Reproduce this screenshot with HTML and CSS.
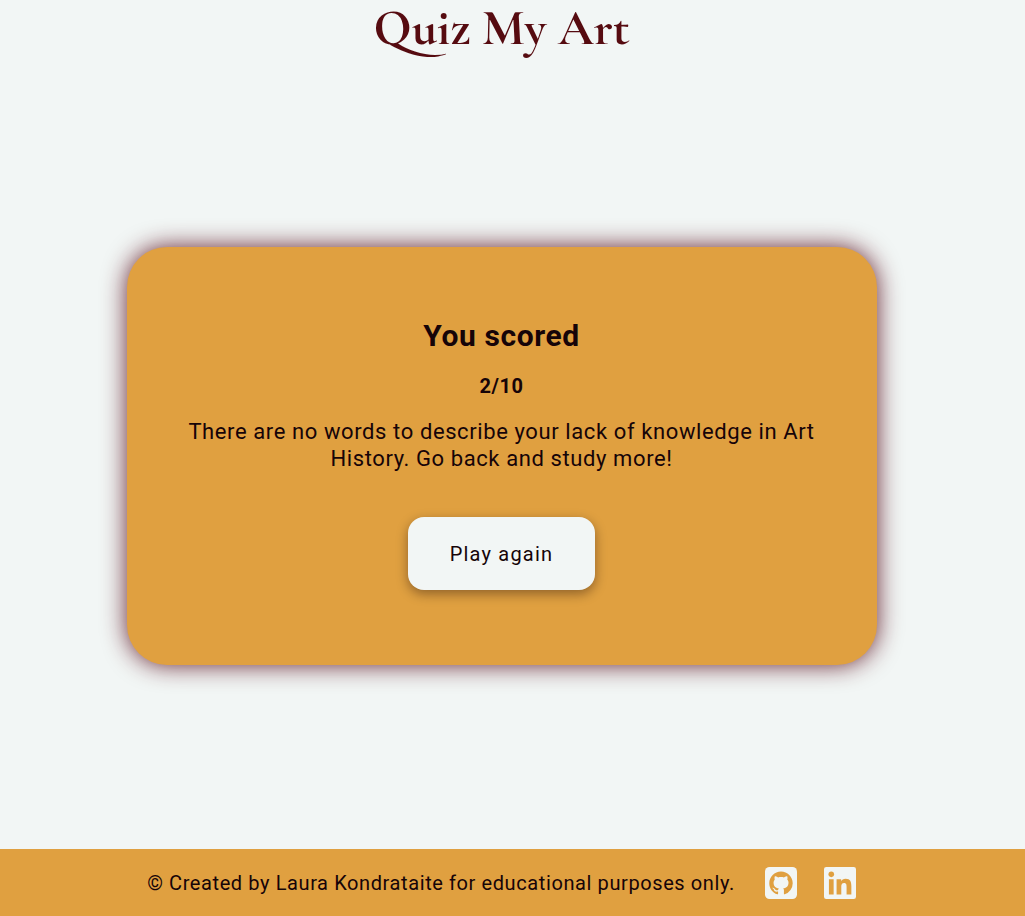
FILE: index.html
```
<!DOCTYPE html>
<html lang="en">
<head>
<meta charset="utf-8">
<meta name="viewport" content="width=device-width, initial-scale=1">
<title>Quiz My Art</title>
<link rel="stylesheet" href="styles.css">
</head>
<body>
<header class="header">
  <h1 class="title">Quiz My Art</h1>
</header>
<main class="main">
  <section class="card">
    <h2 class="card-title">You scored</h2>
    <p class="score">2/10</p>
    <p class="message">There are no words to describe your lack of knowledge in Art History. Go back and study more!</p>
    <button class="button" type="button">Play again</button>
  </section>
</main>
<footer class="footer">
  <p class="credit">© Created by Laura Kondrataite for educational purposes only.</p>
  <nav class="links">
    <a class="link" href="#github" aria-label="GitHub">
      <svg class="icon" viewBox="0 0 448 448" aria-hidden="true">
        <rect class="icon-tile" width="448" height="448" rx="64"/>
        <g transform="translate(60 62) scale(20.5)">
          <path class="icon-mark" d="M8 0C3.58 0 0 3.58 0 8c0 3.54 2.29 6.53 5.47 7.59.4.07.55-.17.55-.38 0-.19-.01-.82-.01-1.49-2.01.37-2.53-.49-2.69-.94-.09-.23-.48-.94-.82-1.13-.28-.15-.68-.52-.01-.53.63-.01 1.08.58 1.23.82.72 1.21 1.87.87 2.33.66.07-.52.28-.87.51-1.07-1.78-.2-3.64-.89-3.64-3.95 0-.87.31-1.59.82-2.15-.08-.2-.36-1.02.08-2.12 0 0 .67-.21 2.2.82.64-.18 1.32-.27 2-.27s1.36.09 2 .27c1.53-1.04 2.2-.82 2.2-.82.44 1.1.16 1.92.08 2.12.51.56.82 1.27.82 2.15 0 3.07-1.87 3.75-3.65 3.95.29.25.54.73.54 1.48 0 1.07-.01 1.93-.01 2.2 0 .21.15.46.55.38A8.01 8.01 0 0 0 16 8c0-4.42-3.58-8-8-8z"/>
        </g>
      </svg>
    </a>
    <a class="link" href="#linkedin" aria-label="LinkedIn">
      <svg class="icon" viewBox="0 0 448 448" aria-hidden="true">
        <rect class="icon-tile" width="448" height="448" rx="32"/>
        <circle class="icon-mark" cx="102" cy="103" r="39"/>
        <path class="icon-mark" d="M69 170h66v214H69zM176 170h64v30c9-17 31-35 63-35 67 0 80 44 80 102v117h-67V280c0-25 0-57-34-57-35 0-40 27-40 55v106h-66z"/>
      </svg>
    </a>
  </nav>
</footer>
</body>
</html>
```
FILE: styles.css
```
:root {
  --paper: #f2f6f5;
  --gold: #e0a040;
  --wine: #560b10;
  --ink: #160408;
  --gutter: 22px;
}

* {
  box-sizing: border-box;
}

body {
  display: flex;
  flex-direction: column;
  min-height: 100vh;
  margin: 0;
  background: var(--paper);
  color: var(--ink);
  font-family: Roboto, "Liberation Sans", sans-serif;
  font-size: 20px;
  letter-spacing: 0.03em;
}

h1, h2, p {
  margin: 0;
}

.header {
  padding-right: var(--gutter);
  text-align: center;
}

.title {
  color: var(--wine);
  font: 700 50px/56px "Cormorant Garamond", "Liberation Serif", serif;
  letter-spacing: normal;
}

.main {
  flex: 1;
  display: flex;
  align-items: center;
  justify-content: center;
  padding: 7px var(--gutter) 0 0;
}

.card {
  display: flex;
  flex-direction: column;
  align-items: center;
  width: 75%;
  max-width: 750px;
  padding: 71px 60px 75px;
  border-radius: 40px;
  background: var(--gold);
  box-shadow: 0 0 24px rgb(86 11 26 / 90%);
  text-align: center;
}

.card-title {
  font-size: 30px;
  font-weight: 700;
  line-height: 36px;
}

.score {
  margin-top: 20px;
  font-size: 20px;
  font-weight: 700;
  line-height: 24px;
}

.message {
  margin-top: 20px;
  font-size: 22px;
  line-height: 27px;
}

.button {
  margin-top: 45px;
  padding: 25px 42px 24px;
  border: 0;
  border-radius: 16px;
  background: var(--paper);
  box-shadow: 0 4px 12px rgb(22 4 8 / 40%);
  color: inherit;
  font: 400 20px/24px Roboto, "Liberation Sans", sans-serif;
  letter-spacing: 0.06em;
  cursor: pointer;
}

.footer {
  display: flex;
  align-items: center;
  justify-content: center;
  gap: 30px;
  min-height: 67px;
  padding: 12px var(--gutter) 12px 0;
  background: var(--gold);
}

.credit {
  line-height: 24px;
}

.links {
  display: flex;
  gap: 27px;
}

.link {
  display: flex;
}

.icon {
  width: 32px;
  height: 32px;
}

.icon-tile {
  fill: var(--paper);
}

.icon-mark {
  fill: var(--gold);
}
```
